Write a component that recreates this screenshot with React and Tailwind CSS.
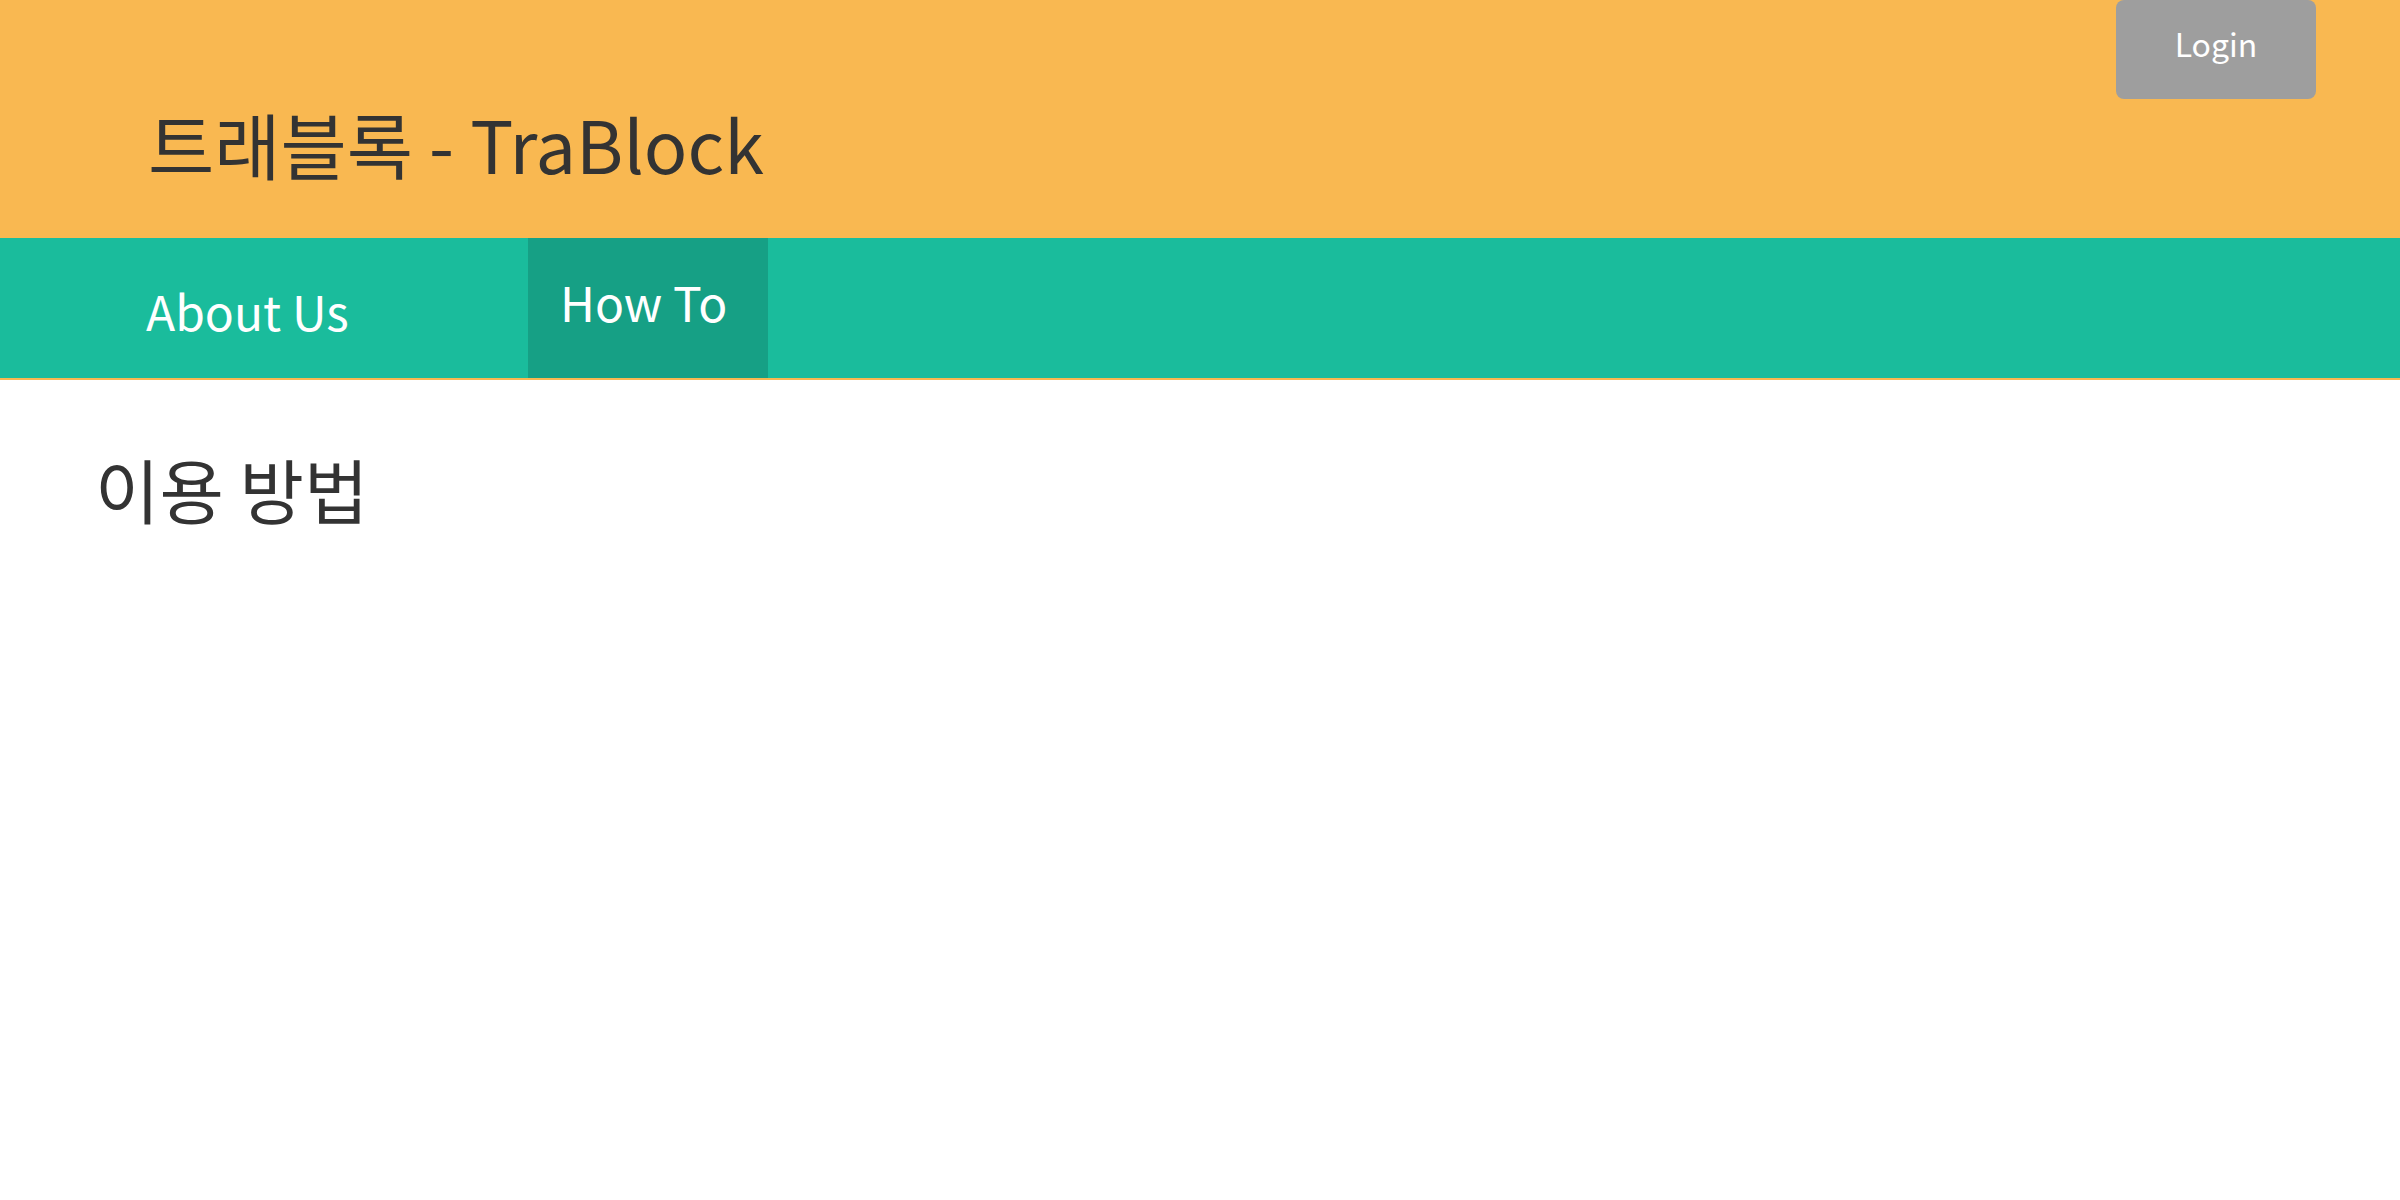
export default function App() {
  return (
    <div className="min-h-screen bg-white font-['Noto_Sans_CJK_KR','Noto_Sans',sans-serif] text-[#333333]">
      {/* header */}
      <header className="relative h-[238px] bg-[#f9b851]">
        <h1 className="pl-[148px] pt-[107px] text-[72px] leading-none font-normal">트래블록 - TraBlock</h1>
        <button className="absolute right-[84px] top-0 flex h-[99px] w-[200px] justify-center rounded-lg bg-[#9e9e9e] pt-[27px] text-[32px] leading-none text-white">
          Login
        </button>
      </header>

      {/* nav */}
      <nav className="flex h-[142px] border-b-2 border-[#f9b851] bg-[#1abc9c] text-[48px] leading-none text-white">
        <a className="w-[528px] pl-[146px] pt-[48px]">About Us</a>
        <a className="w-[240px] bg-[#16a085] pl-[32px] pt-[39px]">How To</a>
      </nav>

      <main className="pl-[95px] pt-[74px]">
        <h2 className="text-[70px] leading-none font-normal">이용 방법</h2>
      </main>
    </div>
  );
}
